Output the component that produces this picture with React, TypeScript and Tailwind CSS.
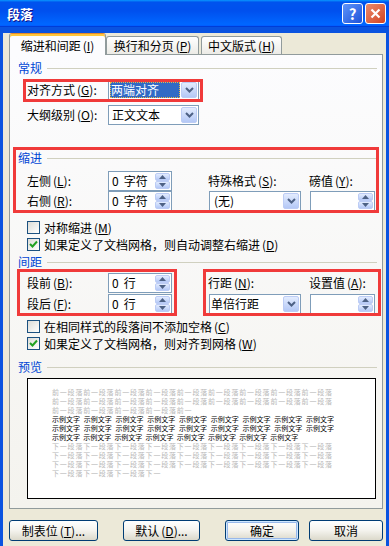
import type { ReactNode } from 'react'

function U({ c }: { c: string }) {
  return <span className="underline decoration-1 underline-offset-[1px]">{c}</span>
}

function Label({ text, acc }: { text: string; acc: string }) {
  return (
    <span className="whitespace-nowrap leading-[14px]">
      {text}
      <span className="ml-[2px]">(</span>
      <U c={acc} />
      ):
    </span>
  )
}

function Chevron() {
  return (
    <svg width="9" height="6" viewBox="0 0 9 6" className="block">
      <path d="M1 1 L4.5 4.5 L8 1" fill="none" stroke="#4D6185" strokeWidth="2" />
    </svg>
  )
}

function DropBtn() {
  return (
    <div className="flex w-[16px] shrink-0 items-center justify-center rounded-[2px] border border-[#BCCCF5] bg-gradient-to-b from-[#E3ECFE] to-[#B4C8F6]">
      <Chevron />
    </div>
  )
}

function Combo({ value, selected, className, textClass = 'pl-[2px]' }: { value?: string; selected?: boolean; className: string; textClass?: string }) {
  return (
    <div className={`flex h-[20px] gap-px border border-[#7F9DB9] bg-white p-px ${className}`}>
      {selected ? (
        <div className="flex flex-1 items-center bg-[#316AC5] pl-px text-white outline-1 outline-dotted outline-offset-[-1px] outline-[#E8B54A]">
          <span className="leading-[14px]">{value}</span>
        </div>
      ) : (
        <div className={`flex flex-1 items-center ${textClass}`}>
          <span className="leading-[14px]">{value}</span>
        </div>
      )}
      <DropBtn />
    </div>
  )
}

function SpinHalf({ up }: { up?: boolean }) {
  return (
    <div className="flex flex-1 items-center justify-center rounded-[2px] border border-[#BCCCF5] bg-gradient-to-b from-[#E3ECFE] to-[#B4C8F6]">
      <svg width="7" height="4" viewBox="0 0 7 4" className="block">
        {up ? <path d="M0 4 L3.5 0 L7 4 Z" fill="#4D6185" /> : <path d="M0 0 L3.5 4 L7 0 Z" fill="#4D6185" />}
      </svg>
    </div>
  )
}

function Spin({ num, unit, className }: { num?: string; unit?: string; className: string }) {
  return (
    <div className={`flex h-[20px] border border-[#7F9DB9] bg-white p-px ${className}`}>
      <div className="flex flex-1 items-center pl-[2px]">
        {num && (
          <span className="leading-[14px]">
            {num}
            <span className="ml-[5px]">{unit}</span>
          </span>
        )}
      </div>
      <div className="flex w-[15px] flex-col">
        <SpinHalf up />
        <SpinHalf />
      </div>
    </div>
  )
}

function Check({ checked, children }: { checked?: boolean; children: ReactNode }) {
  return (
    <div className="flex h-[13px] items-center gap-[4px] pl-[17px]">
      <div className="flex h-[13px] w-[13px] items-center justify-center border border-[#1C5180] bg-gradient-to-br from-[#DCDCD7] to-white">
        {checked && (
          <svg width="9" height="9" viewBox="0 0 9 9" className="block">
            <path d="M1 4 L3.5 6.5 L8 1.5" fill="none" stroke="#21A121" strokeWidth="2" />
          </svg>
        )}
      </div>
      <span className="whitespace-nowrap leading-[14px]">{children}</span>
    </div>
  )
}

function Section({ title, className = '' }: { title: string; className?: string }) {
  return (
    <div className={`flex h-[12px] items-center gap-[5px] pl-[8px] pr-[5px] ${className}`}>
      <span className="leading-[12px] text-[#0046D5]">{title}</span>
      <div className="h-px flex-1 bg-[#D0D0BF]" />
    </div>
  )
}

function Red({ className }: { className: string }) {
  return <div className={`pointer-events-none absolute border-[3px] border-[#F03A3A] ${className}`} />
}

function Btn({ children, className, primary }: { children: ReactNode; className: string; primary?: boolean }) {
  return (
    <button
      type="button"
      className={`flex h-[21px] items-center justify-center rounded-[3px] border border-[#003C74] bg-gradient-to-b from-white via-[#F4F3EE] to-[#DCD9CB] text-[12px] leading-[14px] ${
        primary ? 'shadow-[inset_0_0_0_1px_#CEE7FF,inset_0_0_0_2px_#98B8EA]' : ''
      } ${className}`}
    >
      {children}
    </button>
  )
}

const grayTop = ['前一段落'.repeat(9), '前一段落'.repeat(9), '前一段落'.repeat(4) + '前一']
const grayBottom = ['下一段落'.repeat(9), '下一段落'.repeat(9), '下一段落'.repeat(9), '下一段落'.repeat(3) + '下一']
const sample = [9, 9, 8]

export default function App() {
  return (
    <div className="h-[546px] w-[389px] overflow-hidden bg-[#0A53E0] font-['Noto_Sans_CJK_SC','Noto_Sans',sans-serif] text-[12px] text-black">
      {/* title bar */}
      <div className="flex h-[27px] items-center bg-[linear-gradient(180deg,#0997FF,#0053EE_8%,#0050EE_40%,#0066FF_88%,#0066FF_93%,#005BFF_95%,#003DD7_96%,#003DD7)] pl-[7px] pr-[3px]">
        <span className="flex-1 text-[13px] font-bold leading-[16px] text-white [text-shadow:1px_1px_#0F1089]">段落</span>
        <div className="flex gap-[2px]">
          <div className="flex h-[21px] w-[21px] items-center justify-center rounded-[3px] border border-white bg-gradient-to-br from-[#5F94FA] to-[#1F51D8] text-[15px] font-bold leading-none text-white">
            ?
          </div>
          <div className="flex h-[21px] w-[21px] items-center justify-center rounded-[3px] border border-white bg-gradient-to-br from-[#E98A6C] to-[#D2411E]">
            <svg width="11" height="11" viewBox="0 0 11 11" className="block">
              <path d="M1.5 1.5 L9.5 9.5 M9.5 1.5 L1.5 9.5" stroke="white" strokeWidth="2.2" />
            </svg>
          </div>
        </div>
      </div>

      {/* body */}
      <div className="mx-[3px] h-[519px] bg-[#ECE9D8]">
        {/* tabs */}
        <div className="mt-[6px] flex h-[21px] items-end pl-[6px] pt-[6px]">
          <div className="relative z-10 -mb-px flex h-[22px] w-[97px] items-center justify-center rounded-t-[3px] border border-b-0 border-[#919B9C] border-t-[#E68B2C] bg-[#FCFCFE] pt-[2px] shadow-[inset_0_2px_0_#FFC73C]">
            <span className="whitespace-nowrap leading-[14px]">
              缩进和间距<span className="ml-[2px]">(</span>
              <U c="I" />)
            </span>
          </div>
          <div className="flex h-[18px] w-[93px] items-center justify-center rounded-t-[3px] border border-b-0 border-[#919B9C] bg-gradient-to-b from-white to-[#ECEBE6]">
            <span className="whitespace-nowrap leading-[14px]">
              换行和分页<span className="ml-[2px]">(</span>
              <U c="P" />)
            </span>
          </div>
          <div className="ml-[2px] flex h-[18px] w-[81px] items-center justify-center rounded-t-[3px] border border-b-0 border-[#919B9C] bg-gradient-to-b from-white to-[#ECEBE6]">
            <span className="whitespace-nowrap leading-[14px]">
              中文版式<span className="ml-[2px]">(</span>
              <U c="H" />)
            </span>
          </div>
        </div>

        {/* panel */}
        <div className="ml-[6px] w-[374px] border border-[#919B9C] bg-gradient-to-b from-[#FCFCFE] to-[#F4F3EE] pb-[9px]">
          <Section title="常规" className="mt-[7px]" />

          <div className="relative mt-[6px] grid h-[20px] grid-cols-[81px_101px_101px_66px] items-center pl-[17px]">
            <Label text="对齐方式" acc="G" />
            <Combo value="两端对齐" selected className="w-[91px]" />
            <Red className="-top-px left-[13px] h-[23px] w-[180px]" />
          </div>
          <div className="mt-[5px] grid h-[20px] grid-cols-[81px_101px_101px_66px] items-center pl-[17px]">
            <Label text="大纲级别" acc="O" />
            <Combo value="正文文本" className="w-[91px]" />
          </div>

          {/* 缩进 */}
          <div className="relative mt-[27px]">
            <Section title="缩进" />
            <div className="mt-[7px] grid h-[20px] grid-cols-[81px_101px_101px_66px] items-center pl-[17px]">
              <Label text="左侧" acc="L" />
              <Spin num="0" unit="字符" className="w-[64px]" />
              <span className="-ml-px">
                <Label text="特殊格式" acc="S" />
              </span>
              <span className="-ml-px">
                <Label text="磅值" acc="Y" />
              </span>
            </div>
            <div className="grid h-[20px] grid-cols-[81px_101px_101px_66px] items-center pl-[17px]">
              <Label text="右侧" acc="R" />
              <Spin num="0" unit="字符" className="w-[64px]" />
              <Combo value="(无)" className="w-[92px]" textClass="pl-[3px]" />
              <Spin className="w-[65px]" />
            </div>
            <Red className="-top-[5px] left-[3px] h-[66px] w-[366px]" />
          </div>

          <div className="mt-[10px]">
            <Check>
              对称缩进<span className="ml-[2px]">(</span>
              <U c="M" />)
            </Check>
          </div>
          <div className="mt-[4px]">
            <Check checked>
              如果定义了文档网格，则自动调整右缩进<span className="ml-[2px]">(</span>
              <U c="D" />)
            </Check>
          </div>

          {/* 间距 */}
          <Section title="间距" className="mt-[5px]" />
          <div className="relative mt-[5px]">
            <div className="grid h-[20px] grid-cols-[81px_101px_101px_66px] items-center pl-[17px]">
              <Label text="段前" acc="B" />
              <Spin num="0" unit="行" className="w-[64px]" />
              <span className="-ml-px">
                <Label text="行距" acc="N" />
              </span>
              <span className="-ml-px">
                <Label text="设置值" acc="A" />
              </span>
            </div>
            <div className="mt-px grid h-[20px] grid-cols-[81px_101px_101px_66px] items-center pl-[17px]">
              <Label text="段后" acc="F" />
              <Spin num="0" unit="行" className="w-[64px]" />
              <Combo value="单倍行距" className="w-[92px]" textClass="pl-0" />
              <Spin className="w-[65px]" />
            </div>
            <Red className="-top-[4px] left-[7px] h-[47px] w-[160px]" />
            <Red className="-top-[4px] left-[193px] h-[47px] w-[178px]" />
          </div>

          <div className="mt-[6px]">
            <Check>
              在相同样式的段落间不添加空格<span className="ml-[2px]">(</span>
              <U c="C" />)
            </Check>
          </div>
          <div className="mt-[4px]">
            <Check checked>
              如果定义了文档网格，则对齐到网格<span className="ml-[2px]">(</span>
              <U c="W" />)
            </Check>
          </div>

          {/* 预览 */}
          <Section title="预览" className="mt-[11px]" />
          <div className="ml-[17px] mt-[5px] h-[121px] w-[349px] border border-black bg-white pl-[24px] pt-[9px]">
            <div className="w-[282px] text-[7px] leading-[9px]">
              {grayTop.map((t, i) => (
                <div key={`t${i}`} className="h-[9px] whitespace-nowrap tracking-[0.8px] text-[#B8B8B8]">
                  {t}
                </div>
              ))}
              {sample.map((n, i) => (
                <div key={`s${i}`} className={`flex h-[9px] whitespace-nowrap ${n === 9 ? 'justify-between' : 'gap-[3.2px]'}`}>
                  {Array.from({ length: n }).map((_, j) => (
                    <span key={j}>示例文字</span>
                  ))}
                </div>
              ))}
              {grayBottom.map((t, i) => (
                <div key={`b${i}`} className="h-[9px] whitespace-nowrap tracking-[0.8px] text-[#B8B8B8]">
                  {t}
                </div>
              ))}
            </div>
          </div>
        </div>

        {/* buttons */}
        <div className="mt-[11px] flex pl-[6px]">
          <Btn className="w-[89px]">
            制表位<span className="ml-[2px]">(</span>
            <U c="T" />
            )...
          </Btn>
          <Btn className="ml-[25px] w-[77px]">
            默认<span className="ml-[2px]">(</span>
            <U c="D" />
            )...
          </Btn>
          <Btn primary className="ml-[25px] w-[74px]">
            确定
          </Btn>
          <Btn className="ml-[10px] w-[74px]">取消</Btn>
        </div>
      </div>
    </div>
  )
}
